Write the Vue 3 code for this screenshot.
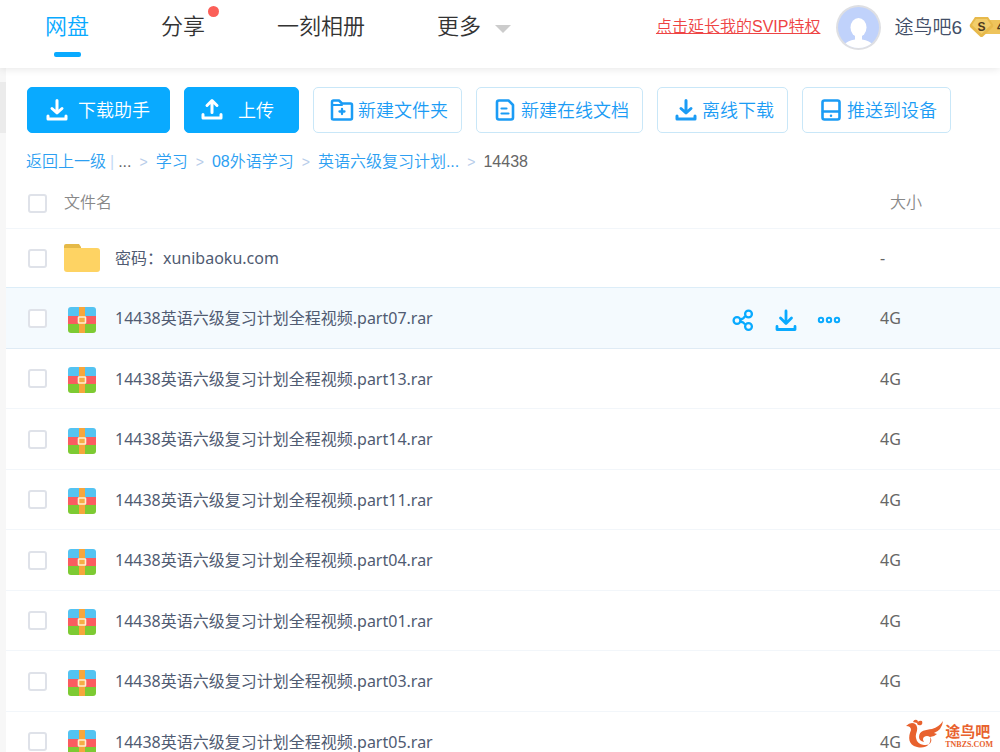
<script setup>
import { ref } from 'vue'

const navItems = [
  { label: '网盘', active: true },
  { label: '分享', dot: true },
  { label: '一刻相册' },
  { label: '更多', caret: true }
]

const tools = [
  { label: '下载助手', icon: 'download', kind: 'primary' },
  { label: '上传', icon: 'upload', kind: 'primary spaced' },
  { label: '新建文件夹', icon: 'folder', kind: 'outline' },
  { label: '新建在线文档', icon: 'doc', kind: 'outline' },
  { label: '离线下载', icon: 'download', kind: 'outline' },
  { label: '推送到设备', icon: 'device', kind: 'outline' }
]

const crumbs = ['学习', '08外语学习', '英语六级复习计划...']

const rar = (part) => ({ name: `14438英语六级复习计划全程视频.part${part}.rar`, size: '4G' })
const files = ref([
  { name: '密码：xunibaoku.com', size: '-', folder: true },
  { ...rar('07'), hover: true },
  rar('13'),
  rar('14'),
  rar('11'),
  rar('04'),
  rar('01'),
  rar('03'),
  rar('05')
])
</script>

<template>
  <div class="page">
    <header class="topbar">
      <nav class="nav">
        <a v-for="item in navItems" :key="item.label" href="#" class="nav-item" :class="{ active: item.active }">
          {{ item.label }}
          <span v-if="item.dot" class="dot"></span>
          <span v-if="item.caret" class="caret"></span>
        </a>
      </nav>
      <div class="account">
        <a href="#" class="promo">点击延长我的SVIP特权</a>
        <svg class="avatar" viewBox="0 0 45 45" aria-hidden="true">
          <defs><clipPath id="face"><circle cx="22.5" cy="22.5" r="20.5" /></clipPath></defs>
          <circle cx="22.5" cy="22.5" r="22.5" fill="#dedfe3" />
          <circle cx="22.5" cy="22.5" r="20.5" fill="#c0d2fb" />
          <g clip-path="url(#face)" fill="#fff">
            <ellipse cx="22.5" cy="22.500" rx="8" ry="9.500" />
            <path d="M19 29h7v5.500c5 .5 9 2.500 12 6.500v4H7v-4c3-4 7-6 12-6.500z" />
          </g>
        </svg>
        <a href="#" class="user">途鸟吧6</a>
        <svg class="badge" viewBox="0 0 31 22" aria-hidden="true">
          <path d="M16 4h16v14H16z" fill="#eec45c" />
          <path d="M6 1h13l5 7.500q1 1.500-.500 3L14 20.500q-1.500 1-3 0L1.500 11.500q-1.500-1.500-.500-3z" fill="#e7b94b" />
          <path d="M7 3h11l4 6-9.500 9L3 9z" fill="#f2cd6b" />
          <text x="12.500" y="15" text-anchor="middle" class="badge-text">S</text>
          <text x="28" y="15" class="badge-text">4</text>
        </svg>
      </div>
    </header>

    <div class="body">
      <aside class="rail"><div class="rail-item"></div></aside>
      <main class="content">
        <div class="toolbar">
          <button v-for="tool in tools" :key="tool.label" type="button" class="btn" :class="tool.kind">
            <svg class="icon" viewBox="0 0 24 24" fill="none" stroke="currentColor" stroke-width="3" stroke-linecap="round" stroke-linejoin="round" aria-hidden="true">
              <template v-if="tool.icon === 'download'">
                <path d="M12 2.500v12M7 10.500l5 4.500 5-4.500" /><path d="M3 18v3h18v-3" />
              </template>
              <template v-else-if="tool.icon === 'upload'">
                <path d="M12 14.500V3M7 7.500l5-5 5 5" /><path d="M3 16.500V20h18v-3.500" />
              </template>
              <template v-else-if="tool.icon === 'folder'">
                <path d="M2 20.500V4q0-1.500 1.500-1.500H9l3 3h8.500Q22 5.500 22 7v13q0 1.500-1.500 1.500h-17Q2 21.500 2 20.500z" stroke-width="2.500" />
                <path d="M2 7h10" stroke-width="2" /><path d="M9.500 13.500h5M12 11v5" stroke-width="2.300" />
              </template>
              <template v-else-if="tool.icon === 'doc'">
                <path d="M6 2.500h9.500l4.500 4.500v12.500q0 2-2 2H6q-2 0-2-2v-15q0-2 2-2z" stroke-width="2.600" />
                <path d="M8.500 10.500h5M8.500 15.500h7" stroke-width="2.200" />
              </template>
              <template v-else>
                <rect x="3.500" y="2.500" width="17" height="19" rx="2" stroke-width="2.600" />
                <path d="M4 13.500h16" stroke-width="2.400" /><path d="M12 17.700v.1" stroke-width="2.500" />
              </template>
            </svg>
            <span>{{ tool.label }}</span>
          </button>
        </div>

        <nav class="crumbs">
          <a href="#">返回上一级</a>
          <span class="bar">|</span>
          <span class="dots">...</span>
          <template v-for="crumb in crumbs" :key="crumb">
            <span class="sep">&gt;</span>
            <a href="#">{{ crumb }}</a>
          </template>
          <span class="sep">&gt;</span>
          <span class="current">14438</span>
        </nav>

        <table class="files">
          <colgroup>
            <col class="w-check" />
            <col class="w-icon" />
            <col />
            <col class="w-actions" />
            <col class="w-size" />
          </colgroup>
          <thead>
            <tr>
              <th class="c-check"><input type="checkbox" aria-label="全选" /></th>
              <th colspan="3"><span class="head">文件名</span></th>
              <th class="c-size"><span class="head">大小</span></th>
            </tr>
          </thead>
          <tbody>
            <tr v-for="(file, i) in files" :key="file.name" :class="{ hover: file.hover }">
              <td class="c-check"><input :id="`file-${i}`" type="checkbox" /></td>
              <td class="c-icon">
                <svg v-if="file.folder" class="folder" viewBox="0 0 36 30" aria-hidden="true">
                  <path d="M2 1h13l2 3v6H0V3q0-2 2-2z" fill="#e5b947" />
                  <path d="M0 5h33q3 0 3 3v18q0 3-3 3H3q-3 0-3-3z" fill="#fed363" />
                </svg>
                <svg v-else class="rar" viewBox="0 0 28 28" aria-hidden="true">
                  <path d="M3 1h22q3 0 3 3v6H0V4q0-3 3-3z" fill="#54c3f1" />
                  <path d="M0 10h28v8H0z" fill="#fa5c60" />
                  <path d="M0 18h28v6q0 3-3 3H3q-3 0-3-3z" fill="#7dca33" />
                  <path d="M11 1h6v26h-6z" fill="#f6a63c" />
                  <rect x="10.500" y="11" width="7" height="6" rx="0.500" fill="#f6ad45" stroke="#fff0cf" stroke-width="1.600" />
                </svg>
              </td>
              <td class="c-name"><label :for="`file-${i}`">{{ file.name }}</label></td>
              <td class="c-actions">
                <div v-if="file.hover" class="actions">
                  <button type="button" aria-label="分享">
                    <svg viewBox="0 0 24 24" fill="none" stroke="currentColor" stroke-width="2.300" aria-hidden="true">
                      <circle cx="6" cy="12.500" r="3.400" /><circle cx="17.500" cy="6" r="3.400" /><circle cx="17.500" cy="18.500" r="3.400" />
                      <path d="M9.200 11.500q3.500-.500 5-3.500M9.200 13.500q3.500.500 5 3" />
                    </svg>
                  </button>
                  <button type="button" aria-label="下载">
                    <svg viewBox="0 0 24 24" fill="none" stroke="currentColor" stroke-width="2.800" stroke-linecap="round" stroke-linejoin="round" aria-hidden="true">
                      <path d="M12 3v12M6.500 10l5.500 5.500 5.500-5.500" /><path d="M3 18.500v3h18v-3" />
                    </svg>
                  </button>
                  <button type="button" aria-label="更多">
                    <svg viewBox="0 0 24 24" fill="none" stroke="currentColor" stroke-width="2" aria-hidden="true">
                      <circle cx="4" cy="12" r="2.200" /><circle cx="12" cy="12" r="2.200" /><circle cx="20" cy="12" r="2.200" />
                    </svg>
                  </button>
                </div>
              </td>
              <td class="c-size">{{ file.size }}</td>
            </tr>
          </tbody>
        </table>
      </main>
    </div>

    <div class="watermark">
      <svg viewBox="0 0 38 30" aria-hidden="true">
        <g fill="#e8622e">
          <path d="M0 7q3-3 6-3 4 0 5 4c1 4-2 7-1 11q1 6 8 7c7 1 9-5 6-8q-3-2-6 0-2 2 0 5-5-1-5-5c0-7 7-7 13-8q7-2 11-8-1 9-9 12l3 1q-3 3-7 3c2 8-5 12-13 10C2 26 2 18 5 11Q5 7 0 7z" />
          <path d="M7 3q1-3 4-2 2 2 0 3zM11 5q1-4 5-3 1 3-1 4-2 1-4-1z" />
        </g>
      </svg>
      <div class="mark-text">
        <span class="mark-name">途鸟吧</span>
        <span class="mark-site">TNBZS.COM</span>
      </div>
    </div>
  </div>
</template>

<style>
body {
  margin: 0;
}
</style>

<style scoped>
.page {
  position: relative;
  display: flex;
  flex-direction: column;
  height: 100vh;
  overflow: hidden;
  background: #fff;
  color: #424e67;
  font-family: "Noto Sans", "Noto Sans CJK SC", sans-serif;
  font-size: 16px;
  font-weight: 350;
}
.page * {
  box-sizing: border-box;
}
a {
  color: inherit;
  text-decoration: none;
}
button {
  font: inherit;
  cursor: pointer;
}
.topbar {
  position: relative;
  flex: none;
  display: flex;
  justify-content: space-between;
  height: 68px;
  padding-left: 45px;
  background: #fff;
  box-shadow: 0 1px 8px rgba(0, 0, 0, 0.1);
  font-family: "Liberation Sans", "Noto Sans CJK SC", sans-serif;
}
.nav {
  display: flex;
  gap: 72px;
}
.nav-item {
  position: relative;
  display: flex;
  align-items: center;
  gap: 14px;
  height: 54px;
  color: #333;
  font-size: 22px;
  line-height: 32px;
  white-space: nowrap;
}
.nav-item.active {
  color: #09aaff;
}
.nav-item.active::after {
  content: "";
  position: absolute;
  left: 9px;
  top: 52px;
  width: 27px;
  height: 5px;
  border-radius: 2px;
  background: #09aaff;
}
.dot {
  position: absolute;
  right: -14px;
  top: 6px;
  width: 11px;
  height: 11px;
  border-radius: 50%;
  background: #fb5f58;
}
.caret {
  margin-top: 4px;
  border: 8px solid transparent;
  border-top-color: #ccc;
  border-bottom-width: 0;
}
.account {
  display: flex;
  align-items: center;
  height: 54px;
  white-space: nowrap;
}
.promo,
.user {
  padding-bottom: 4px;
}
.promo {
  color: #ee4444;
  text-decoration: underline;
}
.avatar {
  width: 45px;
  height: 45px;
  margin: 0 13px 0 16px;
}
.user {
  font-size: 19px;
}
.badge {
  width: 31px;
  height: 22px;
  margin-left: 7px;
}
.badge-text {
  fill: #4d3a1e;
  font-size: 12px;
  font-weight: 700;
}
.body {
  flex: 1;
  display: flex;
  min-height: 0;
}
.rail {
  flex: none;
  width: 6px;
  padding-top: 14px;
  background: #f7f7f7;
}
.rail-item {
  height: 51px;
  background: #ebebeb;
}
.content {
  flex: 1;
  min-width: 0;
  padding-top: 19px;
}
.toolbar {
  display: flex;
  gap: 14px;
  padding-left: 21px;
}
.btn {
  display: flex;
  align-items: center;
  gap: 4px;
  height: 46px;
  padding: 0 13px 0 16px;
  border: 1px solid #c9e7f8;
  border-radius: 5px;
  background: #fff;
  color: #1b9cf5;
  font-size: 18px;
  line-height: 24px;
  white-space: nowrap;
}
.btn.primary {
  gap: 9px;
  padding: 0 19px 0 17px;
  border-color: #09aaff;
  background: #09aaff;
  color: #fff;
}
.btn.spaced {
  gap: 14px;
  padding: 0 24px 0 15px;
}
.icon {
  flex: none;
  width: 24px;
  height: 24px;
}
.crumbs {
  display: flex;
  align-items: center;
  height: 45px;
  padding: 13px 0 0 20px;
  line-height: 24px;
  font-family: "Liberation Sans", "Noto Sans CJK SC", sans-serif;
  white-space: nowrap;
}
.crumbs a {
  color: #2d9ff2;
}
.bar {
  margin: 0 4px;
  color: #c4dbf5;
}
.dots,
.current {
  color: #666;
}
.sep {
  margin: 0 8px;
  color: #b8cdea;
  font-size: 14px;
}
.files {
  width: 100%;
  table-layout: fixed;
  border-collapse: separate;
  border-spacing: 0;
}
.w-check {
  width: 58px;
}
.w-icon {
  width: 51px;
}
.w-actions {
  width: 149px;
}
.w-size {
  width: 120px;
}
th,
td {
  padding: 0;
  border-bottom: 1px solid #f2f6fa;
  text-align: left;
  font-weight: inherit;
  white-space: nowrap;
}
th {
  height: 51px;
}
.head {
  display: block;
  padding-bottom: 4px;
  color: #888;
}
td {
  height: 61px;
}
tbody tr:nth-child(odd) td {
  height: 60px;
}
tbody tr:first-child td {
  height: 59px;
  border-bottom-color: #dcedf8;
}
.hover td {
  background: #f4fafe;
  border-bottom-color: #dfebf5;
}
.c-check {
  padding-left: 22px;
}
input[type="checkbox"] {
  display: block;
  appearance: none;
  width: 19px;
  height: 19px;
  margin: 0;
  border: 2px solid #dfe2e9;
  border-radius: 3px;
  background: #fff;
}
.c-icon svg {
  display: block;
}
.folder {
  width: 36px;
  height: 30px;
}
.rar {
  width: 28px;
  height: 28px;
  margin: 3px 0 0 4px;
}
td.c-name {
  padding-bottom: 2px;
  color: #505b72;
  font-weight: 400;
}
.c-size {
  color: #666;
}
td.c-size {
  font-weight: 400;
}
th.c-size {
  padding-left: 10px;
}
.actions {
  display: flex;
  gap: 19px;
  padding-top: 4px;
}
.actions button {
  width: 24px;
  height: 24px;
  padding: 0;
  border: 0;
  background: none;
  color: #09aaff;
}
.actions svg {
  display: block;
}
.watermark {
  position: absolute;
  right: 7px;
  bottom: 3px;
  display: flex;
  align-items: flex-end;
  gap: 1px;
  color: #e8622e;
}
.watermark svg {
  width: 38px;
  height: 30px;
}
.mark-text {
  display: flex;
  flex-direction: column;
  font-weight: 700;
}
.mark-name {
  font-size: 15px;
  line-height: 17px;
}
.mark-site {
  font-family: "Liberation Serif", serif;
  font-size: 8px;
  line-height: 9px;
}
</style>
